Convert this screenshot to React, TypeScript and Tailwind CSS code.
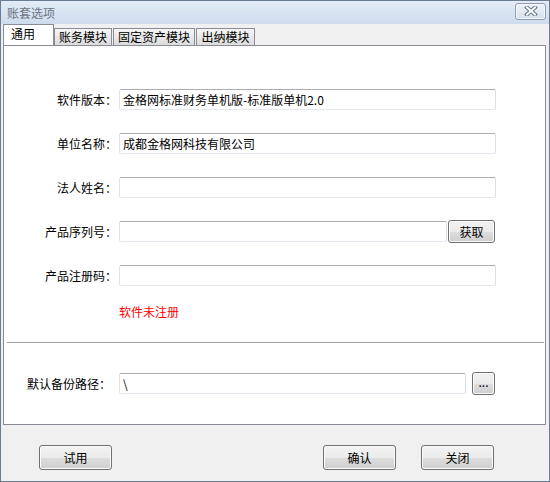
import React from "react";

const font = { fontFamily: '"Noto Sans CJK SC", "Liberation Sans", sans-serif' };

function Input({ value, className = "" }: { value?: string; className?: string }) {
  return (
    <div
      className={`h-[21px] flex items-center rounded-[2px] border border-t-[#abadb3] border-l-[#e2e3ea] border-r-[#dbdfe6] border-b-[#e3e9ef] bg-white pl-[3px] text-[12px] leading-none text-black ${className}`}
    >
      {value}
    </div>
  );
}

function Btn({ children, className = "" }: { children: React.ReactNode; className?: string }) {
  return (
    <div
      className={`flex items-center justify-center rounded-[3px] border border-[#707070] bg-[linear-gradient(#f2f2f2_0%,#ebebeb_50%,#dddddd_51%,#cfcfcf_100%)] text-[12px] leading-none text-black shadow-[inset_0_0_0_1px_#fcfcfc] ${className}`}
    >
      {children}
    </div>
  );
}

function Row({ label, children, labelClass = "" }: { label: string; children: React.ReactNode; labelClass?: string }) {
  return (
    <div className="flex items-center h-[21px]">
      <div className={`w-[113px] shrink-0 text-right text-[12px] leading-none text-black ${labelClass}`}>{label}</div>
      <div className="ml-[2px] flex items-center">{children}</div>
    </div>
  );
}

export default function App() {
  return (
    <div style={font} className="w-[550px] h-[482px] flex flex-col border border-[#6b7d92] bg-[#f0f0f0] overflow-hidden">
      {/* Title bar */}
      <div className="h-[23px] shrink-0 flex items-center justify-between bg-[linear-gradient(#e3ecf7,#cddcee)] pl-[6px] pr-[3px]">
        <span className="text-[12px] leading-none text-[#6d7480]">账套选项</span>
        <div className="mt-[-3px] w-[31px] h-[17px] flex items-center justify-center rounded-[3px] border border-[#8d9cb0] bg-[linear-gradient(#eef3f9,#d6e1ee)] shadow-[inset_0_0_0_1px_#f4f7fb]">
          <svg width="14" height="10" viewBox="0 0 14 10">
            <path d="M3 1.5 L11 8.5 M11 1.5 L3 8.5" stroke="#66768a" strokeWidth="4" strokeLinecap="square" fill="none" />
            <path d="M3 1.5 L11 8.5 M11 1.5 L3 8.5" stroke="#ffffff" strokeWidth="2" strokeLinecap="square" fill="none" />
          </svg>
        </div>
      </div>

      {/* Body */}
      <div className="flex-1 flex flex-col px-[2px]">
        {/* Tabs */}
        <div className="h-[21px] flex items-end relative z-10">
          <div className="h-[21px] w-[51px] bg-white border border-b-0 border-[#898c95] flex items-start pl-[7px] pt-[3px] text-[12px] leading-none text-black">
            通用
          </div>
          <div className="h-[18px] w-[58px] mb-[-1px] border border-[#898c95] bg-[linear-gradient(#f6f6f6,#dcdcdc)] flex items-center justify-center text-[12px] leading-none text-black">
            账务模块
          </div>
          <div className="h-[18px] w-[82px] ml-[1px] mb-[-1px] border border-[#898c95] bg-[linear-gradient(#f6f6f6,#dcdcdc)] flex items-center justify-center text-[12px] leading-none text-black">
            固定资产模块
          </div>
          <div className="h-[18px] w-[59px] ml-[1px] mb-[-1px] border border-[#898c95] bg-[linear-gradient(#f6f6f6,#dcdcdc)] flex items-center justify-center text-[12px] leading-none text-black">
            出纳模块
          </div>
        </div>

        {/* Panel */}
        <div className="h-[380px] w-[543px] bg-white border border-[#898c95] flex flex-col pt-[43px]">
          <div className="flex flex-col gap-[23px]">
            <Row label="软件版本：">
              <Input className="w-[377px]" value="金格网标准财务单机版-标准版单机2.0" />
            </Row>
            <Row label="单位名称：">
              <Input className="w-[377px]" value="成都金格网科技有限公司" />
            </Row>
            <Row label="法人姓名：">
              <Input className="w-[377px]" />
            </Row>
            <Row label="产品序列号：">
              <Input className="w-[328px]" />
              <Btn className="ml-[1px] w-[47px] h-[23px]">获取</Btn>
            </Row>
            <Row label="产品注册码：">
              <Input className="w-[377px]" />
            </Row>
          </div>
          <div className="mt-[18px] ml-[115px] text-[12px] leading-[16px] text-[#ff0000]">软件未注册</div>
          <div className="mt-[22px] ml-[3px] mr-[1px] h-[1px] bg-[#a0a0a0]" />
          <div className="mt-[30px]">
            <Row label="默认备份路径：" labelClass="pr-[6px]">
              <Input className="w-[347px]" value="\" />
              <Btn className="ml-[6px] w-[23px] h-[23px] items-end pb-[6px] text-[10px]">...</Btn>
            </Row>
          </div>
        </div>

        {/* Bottom buttons */}
        <div className="mt-[20px] flex items-center">
          <Btn className="ml-[36px] w-[73px] h-[25px]">试用</Btn>
          <Btn className="ml-auto w-[73px] h-[25px]">确认</Btn>
          <Btn className="ml-[25px] mr-[53px] w-[73px] h-[25px]">关闭</Btn>
        </div>
      </div>
    </div>
  );
}
